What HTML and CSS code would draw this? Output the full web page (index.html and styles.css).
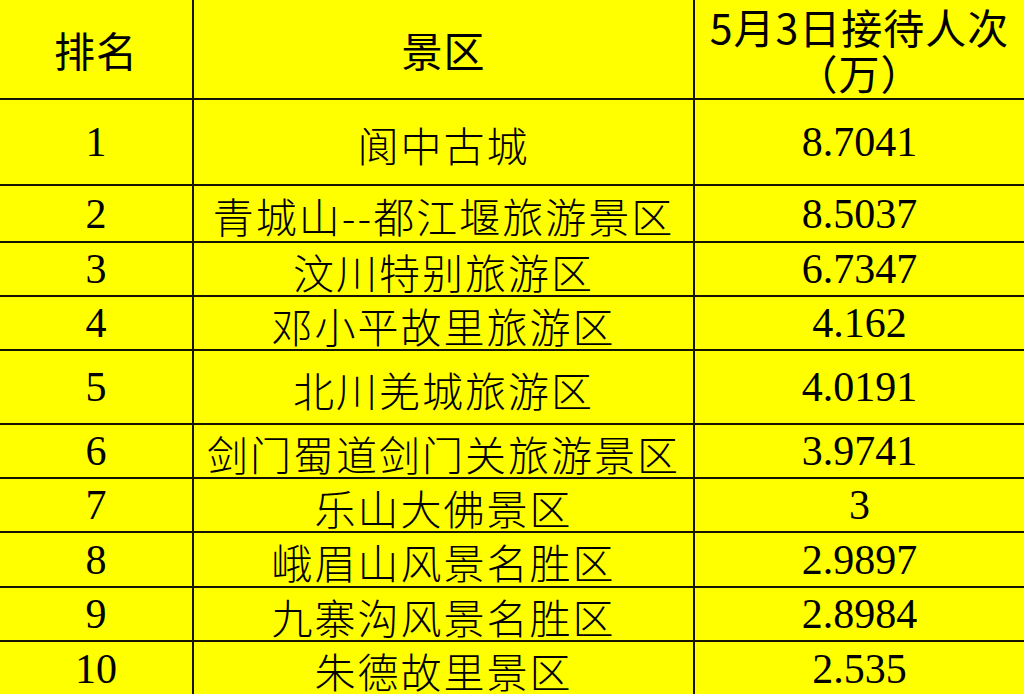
FILE: index.html
```html
<!DOCTYPE html>
<html lang="zh-CN">
<head>
<meta charset="utf-8">
<title>5月3日景区接待人次排名</title>
<link rel="stylesheet" href="styles.css">
</head>
<body>
<table class="rank">
  <colgroup>
    <col class="c-rank">
    <col class="c-name">
    <col class="c-num">
  </colgroup>
  <thead>
    <tr class="h-head">
      <th>排名</th>
      <th>景区</th>
      <th>5月3日接待人次<br>（万）</th>
    </tr>
  </thead>
  <tbody>
    <tr class="h86"><td>1</td><td>阆中古城</td><td>8.7041</td></tr>
    <tr class="h57"><td>2</td><td>青城山--都江堰旅游景区</td><td>8.5037</td></tr>
    <tr class="h54"><td>3</td><td>汶川特别旅游区</td><td>6.7347</td></tr>
    <tr class="h54"><td>4</td><td>邓小平故里旅游区</td><td>4.162</td></tr>
    <tr class="h74"><td>5</td><td>北川羌城旅游区</td><td>4.0191</td></tr>
    <tr class="h54"><td>6</td><td>剑门蜀道剑门关旅游景区</td><td>3.9741</td></tr>
    <tr class="h54"><td>7</td><td>乐山大佛景区</td><td>3</td></tr>
    <tr class="h55"><td>8</td><td>峨眉山风景名胜区</td><td>2.9897</td></tr>
    <tr class="h54"><td>9</td><td>九寨沟风景名胜区</td><td>2.8984</td></tr>
    <tr class="h54"><td>10</td><td>朱德故里景区</td><td>2.535</td></tr>
  </tbody>
</table>
</body>
</html>
```
FILE: styles.css
```css
html, body {
  margin: 0;
  padding: 0;
  background: #ffff00;
  overflow: hidden;
}

.rank {
  width: 1024px;
  table-layout: fixed;
  border-collapse: collapse;
  border-style: hidden;
  background: #ffff00;
  color: #000;
}

.c-rank { width: 193px; }
.c-name { width: 501px; }
.c-num { width: 330px; }

.rank th,
.rank td {
  border: 2px solid #141400;
  padding: 0;
  text-align: center;
  vertical-align: middle;
  white-space: nowrap;
}

.rank th {
  font-family: "Noto Sans CJK SC", sans-serif;
  font-weight: 400;
  font-size: 41px;
  line-height: 46px;
  letter-spacing: 1px;
}

.rank td {
  font-family: "Liberation Serif", "Noto Sans CJK SC", serif;
  font-weight: 400;
  font-size: 42px;
  line-height: 1;
}

.rank td:nth-child(2) {
  font-family: "Noto Sans CJK SC", serif;
  font-weight: 300;
  font-size: 41px;
  letter-spacing: 2px;
  padding-top: 4px;
}

.h-head { height: 99px; }
.h86 { height: 86px; }
.h57 { height: 57px; }
.h54 { height: 54px; }
.h55 { height: 55px; }
.h74 { height: 74px; }
```
